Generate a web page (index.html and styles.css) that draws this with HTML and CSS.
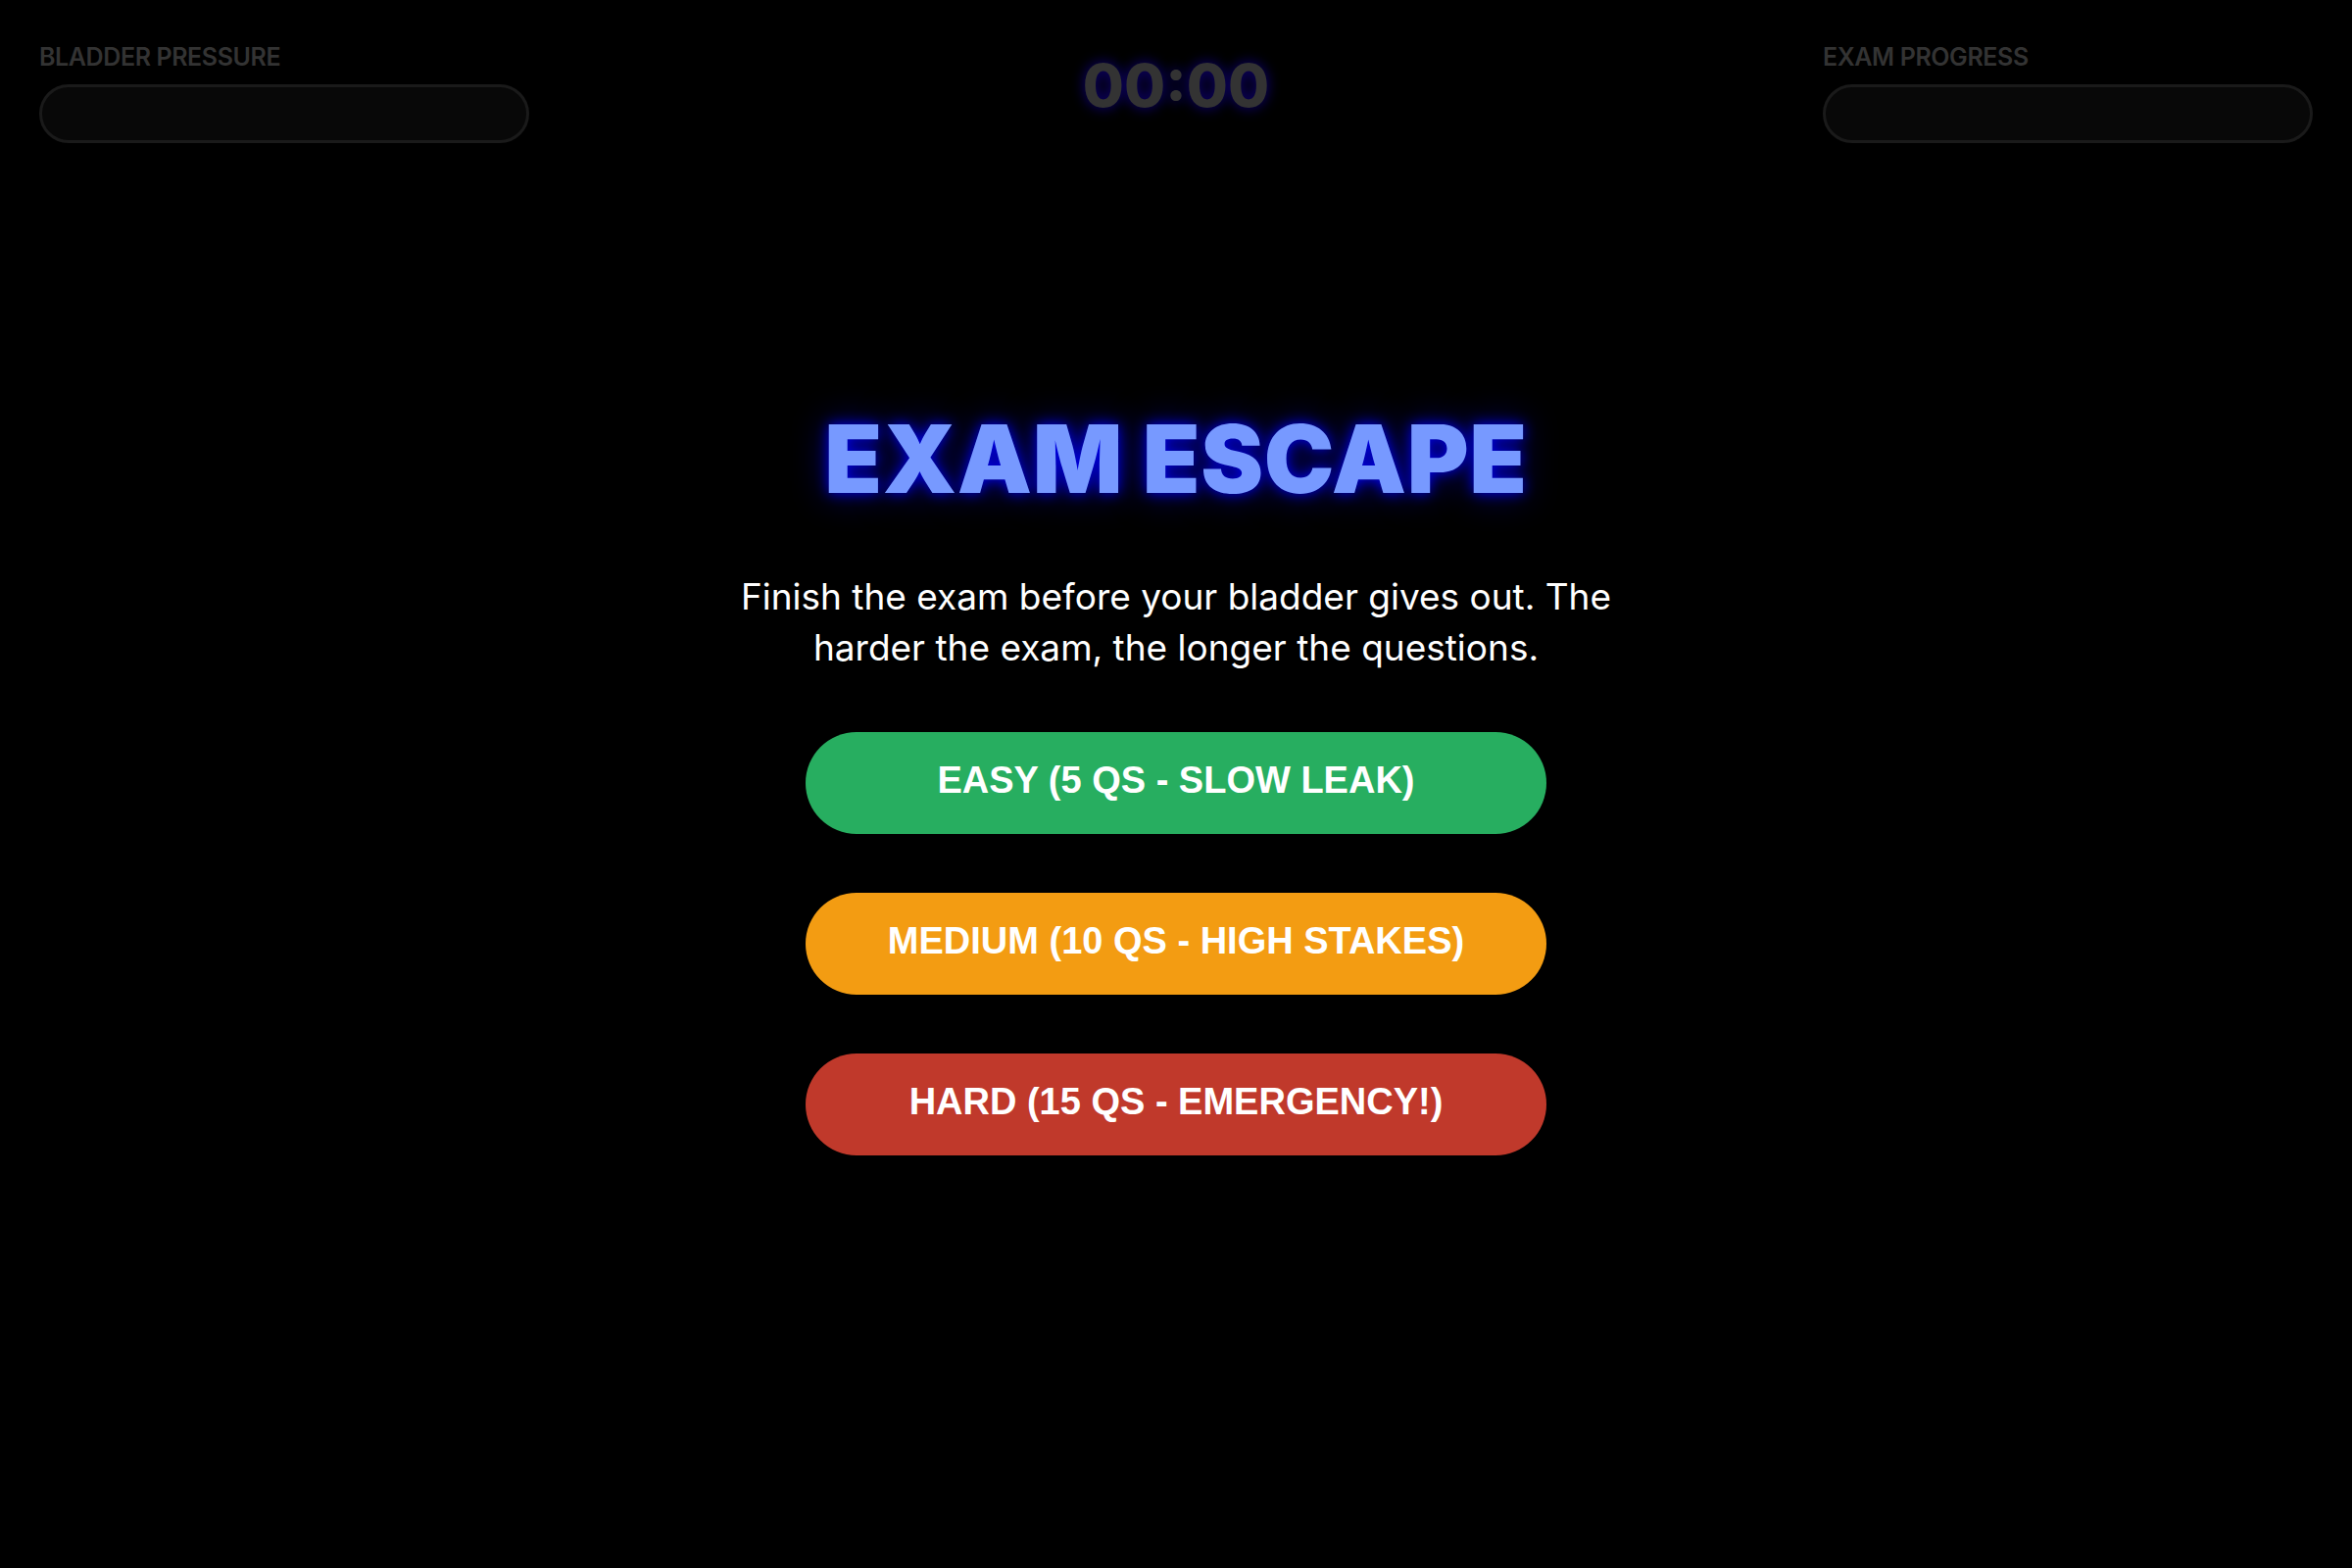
FILE: index.html
```html
<!DOCTYPE html>
<html lang="en">
<head>
<meta charset="utf-8">
<title>Exam Escape</title>
<link rel="stylesheet" href="styles.css">
</head>
<body>
  <header class="hud">
    <div class="meter">
      <div class="meter-label">BLADDER PRESSURE</div>
      <div class="meter-track"></div>
    </div>
    <div class="timer">00:00</div>
    <div class="meter">
      <div class="meter-label">EXAM PROGRESS</div>
      <div class="meter-track"></div>
    </div>
  </header>
  <main class="start">
    <h1 class="title">EXAM ESCAPE</h1>
    <p class="intro">Finish the exam before your bladder gives out. The harder the exam, the longer the questions.</p>
    <div class="choices">
      <button class="choice choice-easy">EASY (5 QS - SLOW LEAK)</button>
      <button class="choice choice-medium">MEDIUM (10 QS - HIGH STAKES)</button>
      <button class="choice choice-hard">HARD (15 QS - EMERGENCY!)</button>
    </div>
  </main>
</body>
</html>
```
FILE: styles.css
```css
html, body {
  margin: 0;
  padding: 0;
  background: #000;
  height: 100%;
}
body {
  font-family: Inter, "Noto Sans", sans-serif;
  color: #fff;
}
.hud {
  display: flex;
  justify-content: space-between;
  align-items: flex-start;
  padding: 40px 40px 0;
  height: 146px;
  box-sizing: border-box;
}
.meter {
  width: 500px;
  display: flex;
  flex-direction: column;
}
.meter-label {
  font-size: 25px;
  font-weight: 600;
  line-height: 34px;
  color: #333;
  letter-spacing: -0.4px;
  margin-top: 1px;
}
.meter-track {
  margin-top: 11px;
  height: 60px;
  box-sizing: border-box;
  border: 3px solid #1a1a1a;
  background: #080808;
  border-radius: 30px;
}
.timer {
  font-size: 61px;
  font-weight: 800;
  line-height: 78px;
  color: #333;
  text-shadow: 0 0 14px rgba(20, 0, 170, 0.75);
  margin-top: 8px;
}
.start {
  display: flex;
  flex-direction: column;
  align-items: center;
  padding-top: 265px;
}
.title {
  margin: 0;
  font-size: 96px;
  font-weight: 900;
  line-height: 115px;
  color: #7799ff;
  letter-spacing: 0.6px;
  text-shadow: 0 0 14px rgba(0, 0, 255, 0.9), 0 0 36px rgba(0, 0, 200, 0.6);
}
.intro {
  margin: 57px 0 0;
  max-width: 940px;
  font-size: 37px;
  line-height: 52px;
  font-weight: 400;
  text-align: center;
  color: #fff;
}
.choices {
  margin-top: 60px;
  display: flex;
  flex-direction: column;
  gap: 60px;
}
.choice {
  width: 756px;
  height: 104px;
  border: none;
  border-radius: 52px;
  font-family: "Liberation Sans", Arial, sans-serif;
  font-size: 38px;
  font-weight: 700;
  color: #fff;
  cursor: pointer;
  padding: 0 0 6px;
}
.choice-easy { background: #27ae60; }
.choice-medium { background: #f39c12; }
.choice-hard { background: #c0392b; }
```
